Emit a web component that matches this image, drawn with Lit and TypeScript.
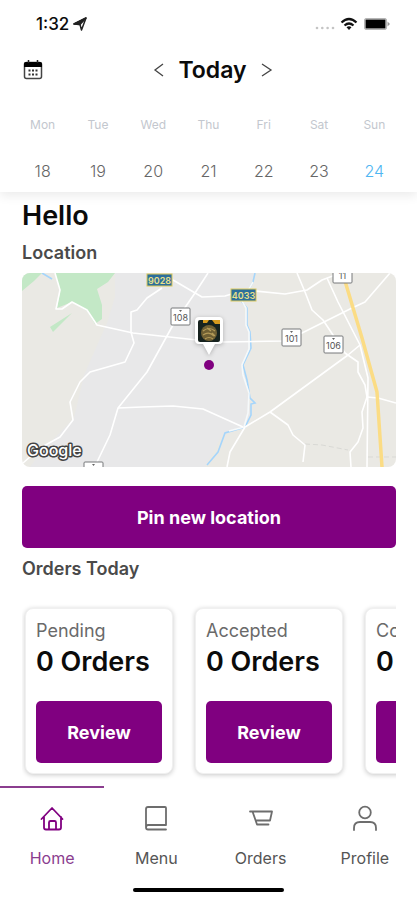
import { LitElement, html, css, svg } from "lit";
import { customElement, property, state } from "lit/decorators.js";
import { classMap } from "lit/directives/class-map.js";

const DAYS = [
  ["Mon", 18],
  ["Tue", 19],
  ["Wed", 20],
  ["Thu", 21],
  ["Fri", 22],
  ["Sat", 23],
  ["Sun", 24],
] as const;

const ROADS = [
  "33,0 38,17 34,36 40,36 50,29 65,37 75,52 111,60 175,67 200,69 260,68 280,60 330,35 343,29 368,0",
  "140,15 125,25 115,37 109,39 109,59 112,70 103,89 68,99 58,109 48,129 51,147 38,164 18,175 1,190",
  "186,0 173,20 151,52 125,99 96,135 88,162 75,189",
  "96,135 120,134 151,133 181,136 221,154",
  "151,7 180,24 203,23 223,17 263,21 285,17 300,7 316,1",
  "205,194 208,179 223,154 248,139 326,82 338,72",
  "248,139 266,152 271,162 283,172 281,189",
  "275,0 283,19 290,37 301,47 311,62 323,80 336,89 336,99 343,112 345,124 340,139 341,155 336,169 328,179 329,194",
  "305,5 316,29 338,72 346,105 345,194",
  "345,124 356,125 374,130",
];

const shield = (x: number, y: number, label: string) => svg`
  <rect class="shield" x=${x} y=${y} width="19" height="17" rx="1"></rect>
  <path class="tick" d="M${x + 8} ${y + 2}h3l-1.500 2z"></path>
  <text class="shield-text" x=${x + 9.5} y=${y + 13}>${label}</text>`;

const plate = (x: number, y: number, label: string) => svg`
  <rect class="plate" x=${x} y=${y} width="25" height="12"></rect>
  <text class="plate-text" x=${x + 12.5} y=${y + 9.5}>${label}</text>`;

@customElement("area-map")
class AreaMap extends LitElement {
  static styles = css`
    :host {
      display: block;
      border-radius: 8px;
      overflow: hidden;
    }
    svg {
      display: block;
      width: 100%;
      height: auto;
      font-family: Inter, "Liberation Sans", sans-serif;
    }
    .land { fill: #eae9e4; }
    .town { fill: #e8e8e9; }
    .green { fill: #c3e8c6; }
    .water { fill: none; stroke: #a5d5fb; stroke-width: 1.6; }
    .road { fill: none; stroke: #fff; stroke-width: 1.6; stroke-linejoin: round; }
    .bank { fill: none; stroke: #f6f9fa; stroke-width: 1.6; }
    .highway { fill: none; stroke: #fbdc84; stroke-width: 3.5; stroke-linejoin: round; }
    .rail { fill: none; stroke: #d9d9d5; stroke-width: 1; stroke-dasharray: 5 3; }
    .shield { fill: #fff; stroke: #77797b; stroke-width: 1; }
    .tick { fill: #666; }
    .shield-text { font-size: 9px; fill: #555; text-anchor: middle; }
    .plate { fill: #2c6f9c; stroke: #d9c75a; stroke-width: 1; }
    .plate-text { font-size: 9px; font-weight: 600; fill: #e9e08a; text-anchor: middle; }
    .callout { fill: #fff; filter: drop-shadow(0 1px 2px rgba(0, 0, 0, 0.25)); }
    .spot { fill: #800080; }
    .brand {
      font-size: 16px;
      font-weight: 500;
      fill: #fff;
      stroke: #444;
      stroke-width: 3;
      stroke-linejoin: round;
      paint-order: stroke;
    }
  `;

  render() {
    return html`
      <svg viewBox="0 0 374 194" role="img" aria-label="Map of the current location">
        <rect class="land" width="374" height="194"></rect>
        <path class="town" d="M93 0V24L85 50 62 102 52 145 18 180 8 194H183L200 162 223 154 229 140 221 92 229 72 220 29 233 0Z"></path>
        <path class="green" d="M0 0H20L12 8 0 18ZM33 0H93L86 9 75 16 80 32V46L73 51 65 38 50 29 35 35 38 19ZM28 54L50 40 31 59Z"></path>
        <polyline class="water" points="20,0 30,6"></polyline>
        <polyline class="water" points="233,0 231,9 220,29 225,35 225,52 228,59 229,75 221,92 225,107 228,125 233,130 229,131 229,142 223,154 203,160 196,179 185,192"></polyline>
        <polyline class="bank" points="231,9 220,28 224,35 224,52 227,59 227,76 220,92 221,102 227,120 226,140 222,154 207,158"></polyline>
        <polyline class="rail" points="283,171 300,172 326,177"></polyline>
        <polyline class="rail" points="346,184 374,184"></polyline>
        ${ROADS.map((p) => svg`<polyline class="road" points=${p}></polyline>`)}
        <polyline class="highway" points="323,8 340,65 355,119 360,194"></polyline>
        ${plate(125, 1, "9028")} ${plate(209, 16, "4033")}
        ${shield(149, 35, "108")} ${shield(260, 56, "101")}
        ${shield(302, 63, "106")} ${shield(311, -7, "11")}
        ${shield(62, 189, "")}
        <path class="callout" d="M177 44h20q4 0 4 4v19q0 4-4 4h-4l-6 11-6-11h-4q-4 0-4-4v-19q0-4 4-4z"></path>
        <rect x="176" y="47" width="22" height="22" rx="2" fill="#17231f"></rect>
        <path d="M181 47h6l-2 3h-4zM190 47h8v4h-5z" fill="#d69a1e"></path>
        <circle cx="187" cy="60" r="8" fill="#6f5f33"></circle>
        <path d="M181 58q6-5 12 0M181 62q6-4 11 1M183 66q4-3 8 0M185 55l4 3M190 60l3 3" fill="none" stroke="#b39a58" stroke-width="1.200"></path>
        <circle class="spot" cx="187" cy="92" r="5"></circle>
        <text class="brand" x="5" y="183">Google</text>
      </svg>
    `;
  }
}

@customElement("order-card")
class OrderCard extends LitElement {
  @property() label = "";
  @property({ type: Number }) count = 0;

  static styles = css`
    :host {
      flex: none;
      box-sizing: border-box;
      width: 148px;
      padding: 10px;
      border: 1px solid #f0f0f0;
      border-radius: 8px;
      background: #fff;
      box-shadow: 0 1px 5px rgba(0, 0, 0, 0.22);
    }
    .label {
      margin: 0;
      font-size: 18px;
      line-height: 24px;
      color: #6a6a6a;
    }
    .count {
      margin: 0 0 20px;
      font-size: 27px;
      line-height: 38px;
      font-weight: 600;
      white-space: nowrap;
      color: #0b0b0b;
    }
    button {
      display: block;
      width: 100%;
      height: 62px;
      border: 0;
      border-radius: 5px;
      background: #800080;
      color: #fff;
      font: 700 18px Inter, "Liberation Sans", sans-serif;
    }
  `;

  render() {
    return html`
      <p class="label">${this.label}</p>
      <p class="count">${this.count} Orders</p>
      <button type="button">Review</button>
    `;
  }
}

const TABS = [
  {
    name: "Home",
    icon: svg`<path d="M2.500 14L13 3 23.500 14M5 12V22.500Q5 24.500 7 24.500H20Q22 24.500 22 22.500V12M10 24V17.500Q10 16 11.500 16H15.500Q17 16 17 17.500V24"></path>`,
  },
  {
    name: "Menu",
    icon: svg`<path d="M23 24.500H5Q3 24.500 3 22.500V4Q3 2 5 2H22Q23 2 23 3V20H5Q3 20 3 22.500"></path>`,
  },
  {
    name: "Orders",
    icon: svg`<path d="M2 6.500H24L22 15.500H8M4.500 6.500L9 19.500H20.500"></path>`,
  },
  {
    name: "Profile",
    icon: svg`<circle cx="13" cy="7.500" r="5.800"></circle><path d="M2 25V23Q2 17 8 17H18Q24 17 24 23V25"></path>`,
  },
];

@customElement("app-root")
class AppRoot extends LitElement {
  @state() private tab = "Home";
  @state() private day = 24;

  static styles = css`
    :host {
      display: flex;
      flex-direction: column;
      min-height: 100vh;
      background: #fff;
      color: #0b0b0b;
      font-family: Inter, "Liberation Sans", sans-serif;
    }
    button {
      padding: 0;
      border: 0;
      background: none;
      color: inherit;
      font: inherit;
      cursor: pointer;
    }
    svg { display: block; }
    .top {
      background: #fff;
      box-shadow: 0 4px 10px rgba(0, 0, 0, 0.08);
    }
    .status {
      display: flex;
      justify-content: space-between;
      align-items: center;
      height: 48px;
      padding: 0 26px 0 36px;
      font-size: 17px;
      font-weight: 500;
    }
    .status-group { display: flex; align-items: center; gap: 4px; }
    .bar {
      display: grid;
      grid-template-columns: 24px 1fr 16px;
      align-items: center;
      height: 44px;
      padding: 0 21px;
    }
    .picker { display: flex; justify-content: center; align-items: center; gap: 12px; }
    .picker h1 { margin: 0; font-size: 23px; line-height: 28px; font-weight: 600; }
    .week {
      display: grid;
      grid-template-columns: repeat(7, 1fr);
      padding: 20px 15px 8px;
    }
    .day { display: grid; gap: 20px; text-align: center; }
    .day-name { font-size: 12px; line-height: 26px; color: #c3c7ce; }
    .day-num { font-size: 16px; line-height: 26px; font-weight: 300; color: #666; }
    .day.on .day-num { color: #4fb6f2; }
    main { flex: 1; padding: 6px 21px 4px 22px; }
    h2 { margin: 0; font-size: 27px; line-height: 36px; font-weight: 600; }
    h3 { margin: 0; font-size: 18px; line-height: 24px; font-weight: 600; color: #4a4a4a; }
    .place { padding: 7px 0 8px; }
    .pin {
      display: block;
      width: 100%;
      height: 62px;
      margin: 19px 0 9px;
      border-radius: 5px;
      background: #800080;
      color: #fff;
      font-size: 18px;
      font-weight: 700;
    }
    .cards {
      display: flex;
      gap: 22px;
      padding: 27px 3px 8px;
      overflow: hidden;
    }
    .tabs { display: grid; grid-template-columns: repeat(4, 1fr); }
    .tab {
      display: grid;
      justify-items: center;
      gap: 15px;
      padding: 17px 0 18px;
      border-top: 2px solid transparent;
      font-size: 16px;
      line-height: 24px;
      color: #555;
    }
    .tab.on { border-top-color: #8b3d8f; color: #8b3d8f; }
    .tab svg { fill: none; stroke: #6d6d6d; stroke-width: 1.8; stroke-linejoin: round; stroke-linecap: round; }
    .tab.on svg { stroke: #800080; }
    .grip { width: 36%; height: 4px; margin: 0 auto 8px; border-radius: 2px; background: #000; }
  `;

  render() {
    return html`
      <header class="top">
        <div class="status">
          <div class="status-group">
            <span>1:32</span>
            <svg width="14" height="14" viewBox="0 0 14 14" fill="none" stroke="#222" stroke-width="1.500" stroke-linejoin="round">
              <path d="M1 7L13 1 8.500 13 7 7.500Z"></path><path d="M1 7L13 1 7 7.500Z" fill="#222"></path>
            </svg>
          </div>
          <div class="status-group">
            <svg width="20" height="14" viewBox="0 0 20 14" fill="#c4c4c4">
              <circle cx="2" cy="11" r="1.300"></circle><circle cx="7.300" cy="11" r="1.300"></circle>
              <circle cx="12.600" cy="11" r="1.300"></circle><circle cx="18" cy="11" r="1.300"></circle>
            </svg>
            <svg width="20" height="14" viewBox="0 0 20 14" fill="none" stroke="#111" stroke-width="2.200">
              <path d="M2.500 5.500Q10-1.500 17.500 5.500M5.500 8.500Q10 4.500 14.500 8.500"></path>
              <path d="M7.500 10.200Q10 8.500 12.500 10.200L10 13Z" fill="#111" stroke="none"></path>
            </svg>
            <svg width="28" height="14" viewBox="0 0 28 14">
              <rect x="1.500" y="1.500" width="22" height="11" rx="1.500" fill="#fff" stroke="#b5b5b5"></rect>
              <rect x="2.500" y="2.500" width="20" height="9" fill="#000"></rect>
              <path d="M24.500 4.500L27 7 24.500 9.500Z" fill="#999"></path>
            </svg>
          </div>
        </div>
        <div class="bar">
          <button type="button" aria-label="Open calendar">
            <svg width="24" height="24" viewBox="0 0 24 24">
              <rect x="3.500" y="4.500" width="17" height="16" rx="2" fill="#fff" stroke="#444" stroke-width="1.500"></rect>
              <path d="M3 9V6Q3 4 5 4H19Q21 4 21 6V9Z" fill="#000"></path>
              <path d="M7.500 2V5M16.500 2V5" stroke="#222" stroke-width="1.500"></path>
              <path d="M7.500 12.500h9M7.500 16.500h9" stroke="#333" stroke-width="2" stroke-dasharray="2 1.500"></path>
            </svg>
          </button>
          <div class="picker">
            <button type="button" aria-label="Previous day">
              <svg width="14" height="14" viewBox="0 0 14 14" fill="none" stroke="#444" stroke-width="1.300"><path d="M11 1L3 7 11 13"></path></svg>
            </button>
            <h1>Today</h1>
            <button type="button" aria-label="Next day">
              <svg width="14" height="14" viewBox="0 0 14 14" fill="none" stroke="#444" stroke-width="1.300"><path d="M3 1L12 7 3 13"></path></svg>
            </button>
          </div>
        </div>
        <div class="week">
          ${DAYS.map(
            ([name, num]) => html`
              <button type="button" class=${classMap({ day: true, on: num === this.day })} @click=${() => (this.day = num)}>
                <span class="day-name">${name}</span>
                <span class="day-num">${num}</span>
              </button>
            `,
          )}
        </div>
      </header>
      <main>
        <h2>Hello</h2>
        <h3 class="place">Location</h3>
        <area-map></area-map>
        <button type="button" class="pin">Pin new location</button>
        <h3>Orders Today</h3>
        <div class="cards">
          <order-card label="Pending"></order-card>
          <order-card label="Accepted"></order-card>
          <order-card label="Completed"></order-card>
        </div>
      </main>
      <nav>
        <div class="tabs">
          ${TABS.map(
            (t) => html`
              <button type="button" class=${classMap({ tab: true, on: t.name === this.tab })} @click=${() => (this.tab = t.name)}>
                <svg width="26" height="26" viewBox="0 0 26 26">${t.icon}</svg>
                <span>${t.name}</span>
              </button>
            `,
          )}
        </div>
        <div class="grip"></div>
      </nav>
    `;
  }
}
